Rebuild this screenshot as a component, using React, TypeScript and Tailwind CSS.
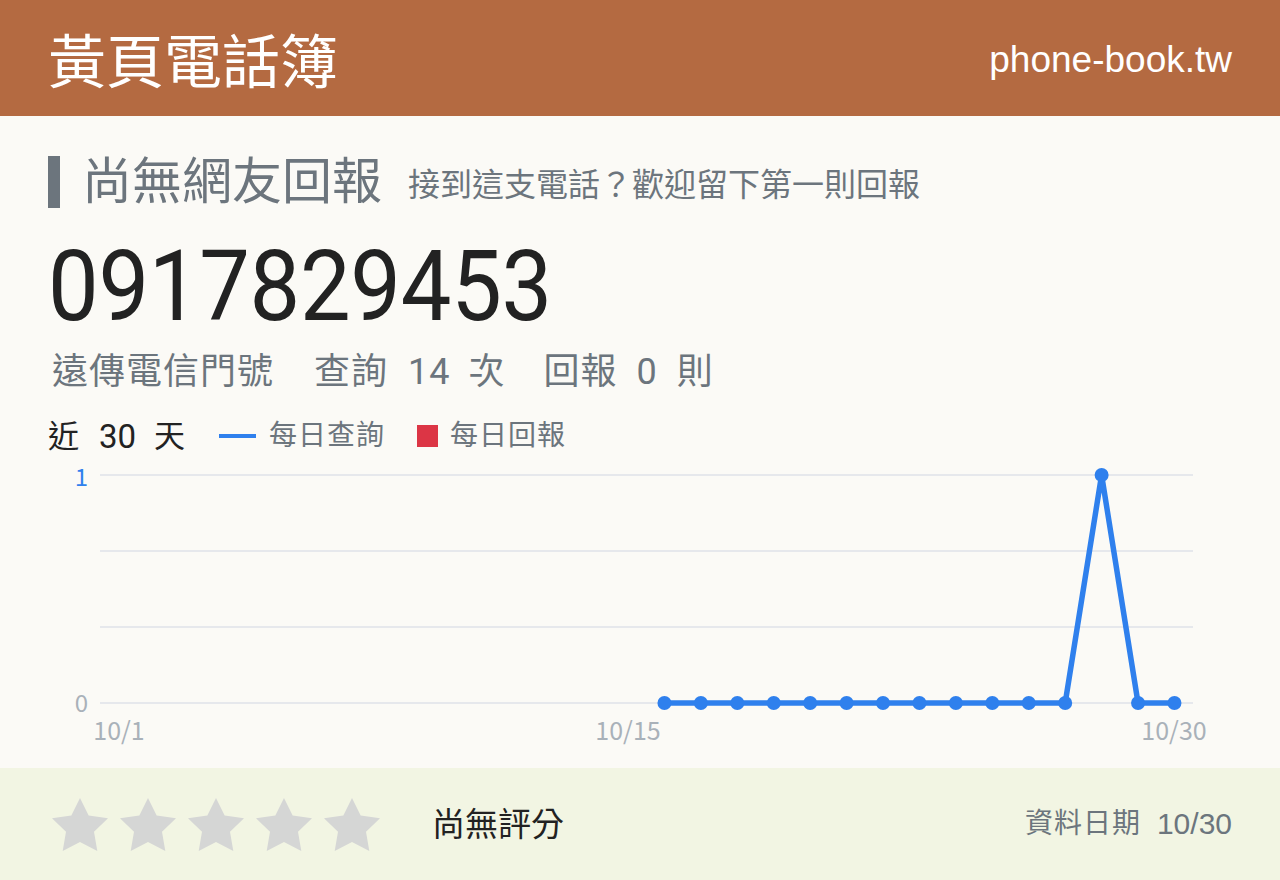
import React from "react";

const CJK = { fontFamily: 'Roboto, "Noto Sans CJK TC", sans-serif' };

// query counts for 10/16 .. 10/30
const points: number[] = [0, 0, 0, 0, 0, 0, 0, 0, 0, 0, 0, 0, 1, 0, 0];

function Chart() {
  const x0 = 118;
  const step = 36.43;
  const yTop = 16;
  const yBase = 244;
  const pts = points.map((v, i) => {
    const day = 16 + i;
    const x = x0 + (day - 1) * step;
    const y = yBase - v * (yBase - yTop);
    return [x, y];
  });
  const path = pts.map(([x, y], i) => `${i ? "L" : "M"}${x},${y}`).join(" ");
  const grid = [16, 92, 168, 244];
  return (
    <svg width={1280} height={308} className="block" style={{ fontFamily: '"Noto Sans CJK TC", sans-serif' }}>
      {grid.map((y) => (
        <line key={y} x1={100} x2={1193} y1={y} y2={y} stroke="#e6e8ec" strokeWidth={2} />
      ))}
      <text x={88} y={27} textAnchor="end" fontSize={24} fill="#2f80ed">1</text>
      <text x={88} y={253} textAnchor="end" fontSize={24} fill="#a9b1b9">0</text>
      <text x={119} y={281} textAnchor="middle" fontSize={25} fill="#a9b1b9">10/1</text>
      <text x={628} y={281} textAnchor="middle" fontSize={25} fill="#a9b1b9">10/15</text>
      <text x={1174} y={281} textAnchor="middle" fontSize={25} fill="#a9b1b9">10/30</text>
      <path d={path} fill="none" stroke="#2f80ed" strokeWidth={5.5} strokeLinejoin="round" />
      {pts.map(([x, y], i) => (
        <circle key={i} cx={x} cy={y} r={7} fill="#2f80ed" />
      ))}
    </svg>
  );
}

function Star() {
  return (
    <svg width={56} height={53} viewBox="2 2 20 19.02" preserveAspectRatio="none">
      <polygon
        points="12,2 15.09,8.26 22,9.27 17,14.14 18.18,21.02 12,17.77 5.82,21.02 7,14.14 2,9.27 8.91,8.26"
        fill="#d5d6d5"
      />
    </svg>
  );
}

export default function App() {
  return (
    <div className="w-[1280px] h-[880px] bg-[#fbfaf6] flex flex-col overflow-hidden" style={CJK}>
      <header className="h-[116px] bg-[#b46a41] flex items-center justify-between px-12 shrink-0">
        <div className="text-white text-[58px] leading-none" style={{ fontFamily: '"Noto Sans CJK TC", sans-serif' }}>
          黃頁電話簿
        </div>
        <div className="text-white text-[37px] leading-none mt-[2px]" style={{ fontFamily: '"Liberation Sans", Arial, sans-serif' }}>
          phone-book.tw
        </div>
      </header>

      <main className="flex-1 flex flex-col">
        <div className="px-12 pt-10">
          <div className="flex items-center h-[52px]">
            <div className="w-3 h-[52px] bg-[#6c757d]" />
            <h1 className="ml-[22px] text-[50px] leading-none text-[#6c757d] font-normal">尚無網友回報</h1>
            <span className="ml-[26px] mt-[6px] text-[32px] leading-none text-[#6c757d]">
              接到這支電話？歡迎留下第一則回報
            </span>
          </div>

          <div
            className="mt-[30px] text-[98px] leading-none text-[#222222] tracking-[-0.3px] scale-x-[0.92] origin-left"
            style={{ fontFamily: 'Roboto, sans-serif' }}
          >
            0917829453
          </div>

          <div className="mt-[18px] text-[36px] leading-none text-[#6c757d] tracking-[1px] pl-1 flex">
            <span>遠傳電信門號</span>
            <span className="ml-[40px]">查詢</span>
            <span className="ml-[20px]">14</span>
            <span className="ml-[18px]">次</span>
            <span className="ml-[38px]">回報</span>
            <span className="ml-[19px]">0</span>
            <span className="ml-[19px]">則</span>
          </div>

          <div className="mt-[31px] h-[30px] flex items-center">
            <span className="text-[31px] leading-none text-[#222222] flex items-center">
              <span>近</span>
              <span className="ml-[20px] text-[33px]">30</span>
              <span className="ml-[18px]">天</span>
            </span>
            <span className="ml-[34px] w-[37px] h-1 bg-[#2f80ed]" />
            <span className="ml-[13px] text-[28px] leading-none text-[#6c757d] tracking-[1px]">每日查詢</span>
            <span className="ml-[32px] w-[21px] h-[22px] bg-[#dc3545]" />
            <span className="ml-3 text-[28px] leading-none text-[#6c757d] tracking-[1px]">每日回報</span>
          </div>
        </div>

        <div className="mt-2">
          <Chart />
        </div>
      </main>

      <footer className="h-[112px] shrink-0 bg-[#f2f5e3] flex items-center px-12">
        <div className="flex gap-3 ml-1">
          {[0, 1, 2, 3, 4].map((i) => (
            <Star key={i} />
          ))}
        </div>
        <div className="ml-[52px] text-[33px] leading-none text-[#222222]">尚無評分</div>
        <div className="ml-auto flex items-center text-[#6c757d]">
          <span className="text-[28px] leading-none tracking-[1px]">資料日期</span>
          <span className="ml-4 text-[30px] leading-none" style={{ fontFamily: '"Liberation Sans", Arial, sans-serif' }}>
            10/30
          </span>
        </div>
      </footer>
    </div>
  );
}
